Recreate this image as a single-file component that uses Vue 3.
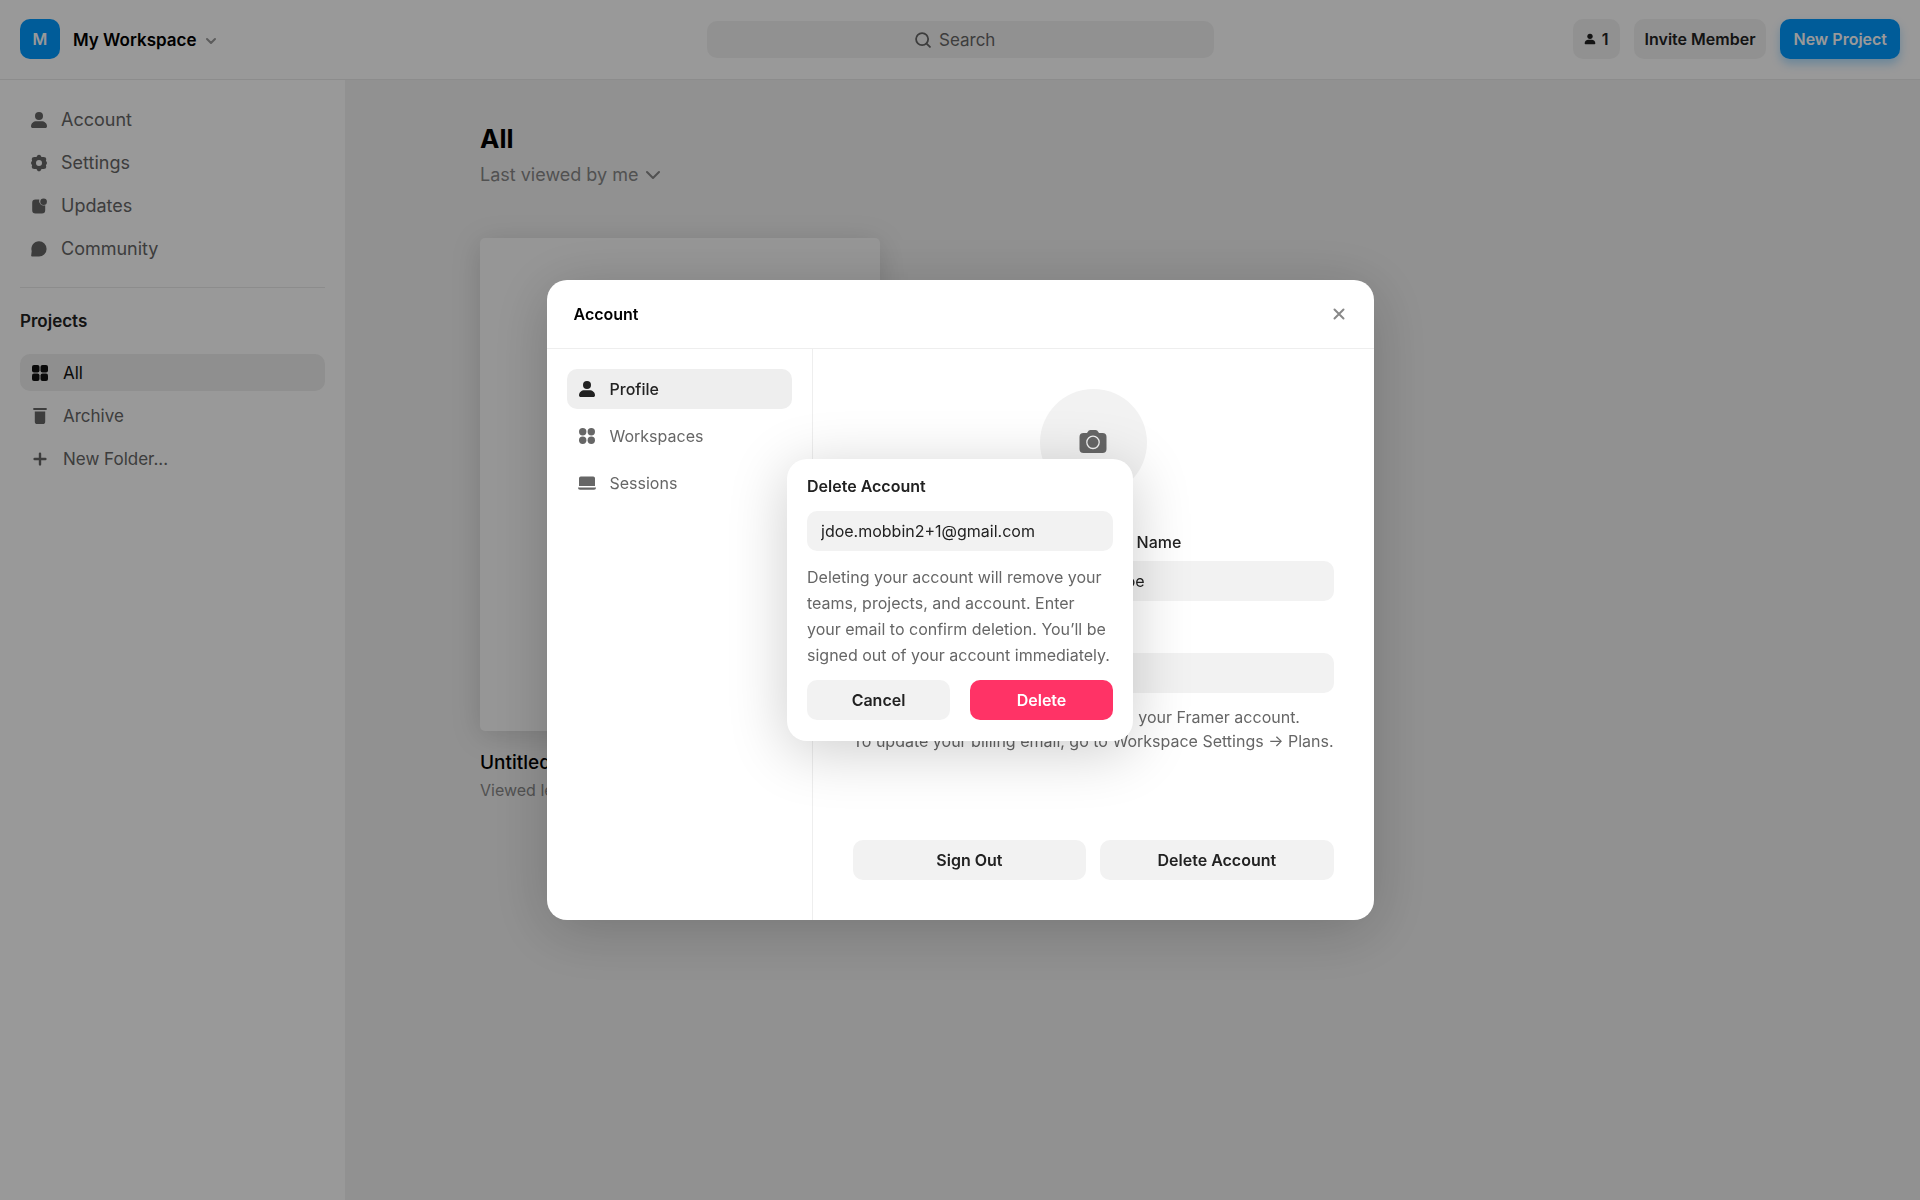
<script setup>
import { ref } from 'vue'

const mainLinks = [
  { label: 'Account', icon: 'user' },
  { label: 'Settings', icon: 'gear' },
  { label: 'Updates', icon: 'updates' },
  { label: 'Community', icon: 'chat' },
]

const folders = [
  { label: 'All', icon: 'grid', active: true },
  { label: 'Archive', icon: 'archive' },
  { label: 'New Folder...', icon: 'plus' },
]

const tabs = [
  { label: 'Profile', icon: 'user', active: true },
  { label: 'Workspaces', icon: 'dots' },
  { label: 'Sessions', icon: 'laptop' },
]

const firstName = ref('John')
const lastName = ref('Doe')
const email = ref('jdoe.mobbin2+1@gmail.com')
const confirmation = ref('jdoe.mobbin2+1@gmail.com')
</script>

<template>
  <svg class="sprite" aria-hidden="true">
    <symbol id="user" viewBox="0 0 18 18">
      <circle cx="9" cy="5" r="4" />
      <path d="M1 15.2C1 12.2 3.6 10.2 6.4 10.2h5.2c2.8 0 5.4 2 5.4 5 0 1-.7 1.8-1.8 1.8H2.8C1.7 17 1 16.200 1 15.200z" />
    </symbol>
    <symbol id="gear" viewBox="0 0 18 18">
      <path
        fill-rule="evenodd"
        d="M7.300 1.600Q9 -.2 10.700 1.600L11.500 2.900 13.400 3 Q16.200 2.900 16.300 5L15.900 6.800 16.700 8Q17.200 9 16.700 10L15.900 11.200 16.300 13Q16.200 15.100 13.400 15L11.500 15.100 10.700 16.400Q9 18.200 7.300 16.400L6.500 15.100 4.600 15Q1.800 15.100 1.700 13L2.100 11.200 1.300 10Q.8 9 1.300 8L2.100 6.800 1.700 5Q1.800 2.900 4.600 3L6.500 2.900ZM9 6a3 3 0 1 0 0 6 3 3 0 0 0 0-6z"
      />
    </symbol>
    <symbol id="updates" viewBox="0 0 18 18">
      <path d="M5.500 2.600H9.300a4.600 4.600 0 0 0 5.900 5.700V13.200a3.300 3.300 0 0 1-3.300 3.300H5.500A3.300 3.300 0 0 1 2.200 13.200V5.900A3.300 3.300 0 0 1 5.500 2.600z" />
      <circle cx="13.600" cy="4.700" r="3.300" />
    </symbol>
    <symbol id="chat" viewBox="0 0 18 18">
      <path d="M9 1.300a7.600 7.600 0 1 1 0 15.200H2.200a1 1 0 0 1-1-1.200L1.700 11A7.600 7.600 0 0 1 9 1.300z" />
    </symbol>
    <symbol id="grid" viewBox="0 0 18 18">
      <rect x="1" y="1" width="7.500" height="7.500" rx="2" />
      <rect x="9.500" y="1" width="7.500" height="7.500" rx="2" />
      <rect x="1" y="9.500" width="7.500" height="7.500" rx="2" />
      <rect x="9.500" y="9.500" width="7.500" height="7.500" rx="2" />
    </symbol>
    <symbol id="archive" viewBox="0 0 18 18">
      <rect x="2.300" y="1" width="13.400" height="2" rx=".6" />
      <path d="M3.800 4.600h10.400v9.800a2.600 2.600 0 0 1-2.600 2.600H6.400a2.600 2.600 0 0 1-2.600-2.600z" />
    </symbol>
    <symbol id="plus" viewBox="0 0 18 18">
      <path d="M9 3.600v10.800M3.600 9h10.800" fill="none" stroke="currentColor" stroke-width="2.400" stroke-linecap="round" />
    </symbol>
    <symbol id="dots" viewBox="0 0 18 18">
      <circle cx="4.700" cy="4.700" r="3.700" />
      <circle cx="13.300" cy="4.700" r="3.700" />
      <circle cx="4.700" cy="13.300" r="3.700" />
      <circle cx="13.300" cy="13.300" r="3.700" />
    </symbol>
    <symbol id="laptop" viewBox="0 0 18 18">
      <path d="M2.800 2.500h12.400a1.800 1.800 0 0 1 1.800 1.800V12H1V4.300a1.800 1.800 0 0 1 1.800-1.800z" />
      <path d="M0 13.500h18v.2a2 2 0 0 1-2 2H2a2 2 0 0 1-2-2z" />
    </symbol>
  </svg>

  <div class="page">
    <header class="topbar">
      <button class="workspace" type="button">
        <span class="avatar">M</span>
        <span class="workspace-name">My Workspace</span>
        <svg class="chevron" viewBox="0 0 12 12" aria-hidden="true">
          <path d="M2 4l4 4 4-4" />
        </svg>
      </button>
      <label class="search">
        <svg viewBox="0 0 18 18" aria-hidden="true">
          <circle cx="8" cy="8" r="6.800" />
          <path d="M13 13l3.800 3.800" />
        </svg>
        <input type="text" placeholder="Search" aria-label="Search" />
      </label>
      <div class="actions">
        <button class="btn members" type="button" aria-label="1 member">
          <svg viewBox="0 0 18 18" aria-hidden="true"><use href="#user" /></svg>
          <span>1</span>
        </button>
        <button class="btn" type="button">Invite Member</button>
        <button class="btn primary" type="button">New Project</button>
      </div>
    </header>

    <div class="columns">
      <aside class="sidebar">
        <nav class="nav main-nav">
          <a v-for="link in mainLinks" :key="link.label" href="#" class="nav-item">
            <svg viewBox="0 0 18 18" aria-hidden="true"><use :href="'#' + link.icon" /></svg>
            {{ link.label }}
          </a>
        </nav>
        <hr />
        <h2>Projects</h2>
        <nav class="nav folders">
          <a
            v-for="folder in folders"
            :key="folder.label"
            href="#"
            class="nav-item"
            :class="{ active: folder.active }"
          >
            <svg viewBox="0 0 18 18" aria-hidden="true"><use :href="'#' + folder.icon" /></svg>
            {{ folder.label }}
          </a>
        </nav>
      </aside>

      <main class="projects">
        <h1>All</h1>
        <button class="sort" type="button">
          Last viewed by me
          <svg viewBox="0 0 14 14" aria-hidden="true"><path d="M1 4l6 6 6-6" /></svg>
        </button>
        <article class="project">
          <div class="thumb"></div>
          <h3>Untitled</h3>
          <p>Viewed less than a minute ago</p>
        </article>
      </main>
    </div>
  </div>

  <div class="overlay dimmed">
    <section class="modal" role="dialog" aria-labelledby="account-title">
      <header class="modal-head">
        <h2 id="account-title">Account</h2>
        <button class="close" type="button" aria-label="Close">
          <svg viewBox="0 0 12 12" aria-hidden="true"><path d="M1.500 1.500l9 9M10.500 1.500l-9 9" /></svg>
        </button>
      </header>
      <div class="modal-body">
        <nav class="tabs">
          <a v-for="tab in tabs" :key="tab.label" href="#" class="tab" :class="{ active: tab.active }">
            <svg viewBox="0 0 18 18" aria-hidden="true"><use :href="'#' + tab.icon" /></svg>
            {{ tab.label }}
          </a>
        </nav>
        <form class="profile" @submit.prevent>
          <button class="photo" type="button" aria-label="Upload photo">
            <svg viewBox="0 0 28 24" aria-hidden="true">
              <path d="M8.500 2.300Q9.600 0 11.500 0h5Q18.400 0 19.500 2.300l.5.700h3.500a4 4 0 0 1 4 4v12a4 4 0 0 1-4 4h-19a4 4 0 0 1-4-4V7a4 4 0 0 1 4-4H8z" />
              <circle cx="14" cy="12.300" r="6.200" />
            </svg>
          </button>
          <div class="names">
            <div class="field">
              <label for="first-name">First Name</label>
              <input id="first-name" v-model="firstName" type="text" />
            </div>
            <div class="field">
              <label for="last-name">Last Name</label>
              <input id="last-name" v-model="lastName" type="text" />
            </div>
          </div>
          <div class="field">
            <label for="email">Email</label>
            <input id="email" v-model="email" type="email" />
          </div>
          <p class="hint">
            This is the email used to log in to your Framer account.<br />
            To update your billing email, go to Workspace Settings → Plans.
          </p>
          <div class="account-actions">
            <button class="btn" type="button">Sign Out</button>
            <button class="btn" type="button">Delete Account</button>
          </div>
        </form>
      </div>
    </section>
  </div>

  <div class="overlay">
    <form class="confirm" role="dialog" aria-labelledby="confirm-title" @submit.prevent>
      <label id="confirm-title" for="confirm-email">Delete Account</label>
      <input id="confirm-email" v-model="confirmation" type="text" />
      <p>
        Deleting your account will remove your<br />
        teams, projects, and account. Enter<br />
        your email to confirm deletion. You’ll be<br />
        signed out of your account immediately.
      </p>
      <div class="confirm-actions">
        <button class="btn" type="button">Cancel</button>
        <button class="btn danger" type="submit">Delete</button>
      </div>
    </form>
  </div>
</template>

<style>
body {
  margin: 0;
  font-family: Inter, "Noto Sans", sans-serif;
  font-size: 16px;
  line-height: 20px;
  color: #222;
  background: #f2f2f2;
}
</style>

<style scoped>
*,
*::before,
*::after {
  box-sizing: border-box;
}

h1,
h2,
h3,
p {
  margin: 0;
}

button,
input {
  font: inherit;
  color: inherit;
  border: 0;
  outline: 0;
}

button {
  padding: 0;
  background: none;
  cursor: pointer;
}

a {
  color: inherit;
  text-decoration: none;
}

svg {
  flex: none;
  fill: currentColor;
}

.sprite {
  position: absolute;
  width: 0;
  height: 0;
}

.page {
  display: flex;
  flex-direction: column;
  min-height: 100vh;
}

.topbar {
  display: grid;
  grid-template-columns: 1fr 507px 1fr;
  align-items: center;
  height: 80px;
  padding: 0 20px 1px;
  background: #fff;
  border-bottom: 1px solid #eaeaea;
}

.workspace {
  display: flex;
  align-items: center;
  justify-self: start;
  font-size: 17px;
  font-weight: 600;
  color: #000;
}

.avatar {
  display: grid;
  place-items: center;
  width: 40px;
  height: 40px;
  margin-right: 13px;
  border-radius: 10px;
  font-size: 16px;
  color: #fff;
  background: #09f;
}

.workspace-name {
  padding-top: 2px;
}

.chevron {
  width: 12px;
  height: 12px;
  margin: 4px 0 0 9px;
  fill: none;
  stroke: #999;
  stroke-width: 2;
  stroke-linecap: round;
  stroke-linejoin: round;
}

.search {
  display: flex;
  align-items: center;
  justify-content: center;
  gap: 8px;
  height: 37px;
  padding-top: 1px;
  border-radius: 10px;
  font-size: 17px;
  color: #666;
  background: #f2f2f2;
}

.search svg {
  width: 16px;
  height: 16px;
  fill: none;
  stroke: currentColor;
  stroke-width: 2;
  stroke-linecap: round;
}

.search input {
  width: 66px;
  padding: 0;
  background: none;
}

.search input::placeholder {
  color: #666;
}

.actions {
  display: flex;
  justify-content: flex-end;
  gap: 14px;
}

.btn {
  height: 40px;
  padding: 0 11px;
  border-radius: 10px;
  font-weight: 600;
  color: #222;
  background: #f2f2f2;
}

.members {
  display: flex;
  align-items: center;
  gap: 6px;
}

.members svg {
  width: 12px;
  height: 12px;
}

.columns {
  display: flex;
  flex: 1;
}

.sidebar {
  width: 345px;
  padding: 21px 20px;
  background: #fff;
}

.sidebar hr {
  height: 1px;
  margin: 20px 0 23px;
  border: 0;
  background: #eaeaea;
}

.sidebar h2 {
  margin-bottom: 23px;
  font-size: 17px;
  font-weight: 600;
  line-height: 20px;
}

.nav {
  display: flex;
  flex-direction: column;
  gap: 6px;
  font-size: 17px;
}

.main-nav {
  font-size: 18px;
}

.nav-item {
  display: flex;
  align-items: center;
  gap: 14px;
  height: 37px;
  padding: 0 10px;
  border-radius: 10px;
  color: #666;
}

.nav-item svg {
  width: 18px;
  height: 18px;
}

.main-nav .nav-item {
  gap: 13px;
}

.folders .nav-item {
  padding: 0 11px;
}

.nav-item.active {
  color: #111;
  background: #eee;
}

.projects {
  flex: 1;
  padding: 43px 135px;
}

.projects h1 {
  font-size: 26px;
  font-weight: 700;
  line-height: 32px;
  color: #000;
}

.sort {
  display: flex;
  align-items: center;
  gap: 8px;
  margin: 10px 0 53px;
  font-size: 18px;
  color: #888;
}

.sort svg {
  width: 14px;
  height: 14px;
  fill: none;
  stroke: currentColor;
  stroke-width: 2;
  stroke-linecap: round;
  stroke-linejoin: round;
}

.project {
  width: 400px;
}

.thumb {
  height: 493px;
  margin-bottom: 22px;
  border-radius: 5px;
  background: #fafafa;
  box-shadow: 0 5px 30px rgba(0, 0, 0, 0.15);
}

.project h3 {
  font-size: 19px;
  font-weight: 500;
  line-height: 20px;
  color: #000;
}

.project p {
  margin-top: 7px;
  color: #888;
}

.overlay {
  position: fixed;
  inset: 0;
  display: grid;
  place-items: center;
}

.dimmed {
  background: rgba(0, 0, 0, 0.4);
}

.modal {
  width: 827px;
  max-width: 100%;
  border-radius: 20px;
  background: #fff;
  box-shadow: 0 10px 60px rgba(0, 0, 0, 0.2);
}

.modal-head {
  display: flex;
  align-items: center;
  justify-content: space-between;
  height: 69px;
  padding: 0 27px;
  border-bottom: 1px solid #eee;
}

.modal-head h2 {
  font-size: 16px;
  font-weight: 600;
  color: #000;
}

.close {
  display: grid;
  place-items: center;
  width: 16px;
  height: 16px;
}

.close svg {
  width: 12px;
  height: 12px;
  fill: none;
  stroke: #888;
  stroke-width: 2;
  stroke-linecap: round;
}

.modal-body {
  display: flex;
}

.tabs {
  display: flex;
  flex-direction: column;
  gap: 7px;
  width: 267px;
  padding: 20px;
  border-right: 1px solid #eee;
}

.tab {
  display: flex;
  align-items: center;
  gap: 14px;
  height: 40px;
  padding: 0 11px;
  border-radius: 10px;
  color: #666;
}

.tab svg {
  width: 18px;
  height: 18px;
}

.tab.active {
  font-weight: 500;
  color: #222;
  background: #eee;
}

.profile {
  display: flex;
  flex: 1;
  flex-direction: column;
  padding: 40px;
}

.photo {
  display: grid;
  place-items: center;
  align-self: center;
  width: 107px;
  height: 107px;
  margin-bottom: 36px;
  padding-bottom: 2px;
  border-radius: 50%;
  color: #666;
  background: #f2f2f2;
}

.photo svg {
  width: 28px;
  height: 24px;
}

.photo circle {
  stroke: #f2f2f2;
  stroke-width: 1.300;
}

.names,
.account-actions {
  display: flex;
  gap: 14px;
}

.names {
  margin-bottom: 23px;
}

.field {
  display: flex;
  flex: 1;
  flex-direction: column;
  gap: 9px;
  min-width: 0;
}

.field label {
  font-weight: 500;
}

.field input,
.confirm input {
  width: 100%;
  height: 40px;
  padding: 0 14px;
  border-radius: 10px;
  background: #f2f2f2;
}

.hint {
  margin: 12px 0 87px;
  line-height: 24px;
  text-align: center;
  white-space: nowrap;
  color: #666;
}

.account-actions .btn,
.confirm-actions .btn {
  flex: 1;
}

.confirm {
  display: flex;
  flex-direction: column;
  width: 346px;
  padding: 17px 20px 21px;
  border-radius: 20px;
  background: #fff;
  box-shadow: 0 10px 60px rgba(0, 0, 0, 0.2);
}

.confirm label {
  margin-bottom: 15px;
  font-weight: 600;
}

.confirm p {
  margin: 13px 0 12px;
  line-height: 26px;
  color: #666;
}

.confirm-actions {
  display: flex;
  gap: 20px;
}

.btn.primary {
  padding: 0 13px;
  color: #fff;
  background: #09f;
  box-shadow: 0 5px 10px rgba(0, 153, 255, 0.3);
}

.btn.danger {
  color: #fff;
  background: #f36;
}
</style>
